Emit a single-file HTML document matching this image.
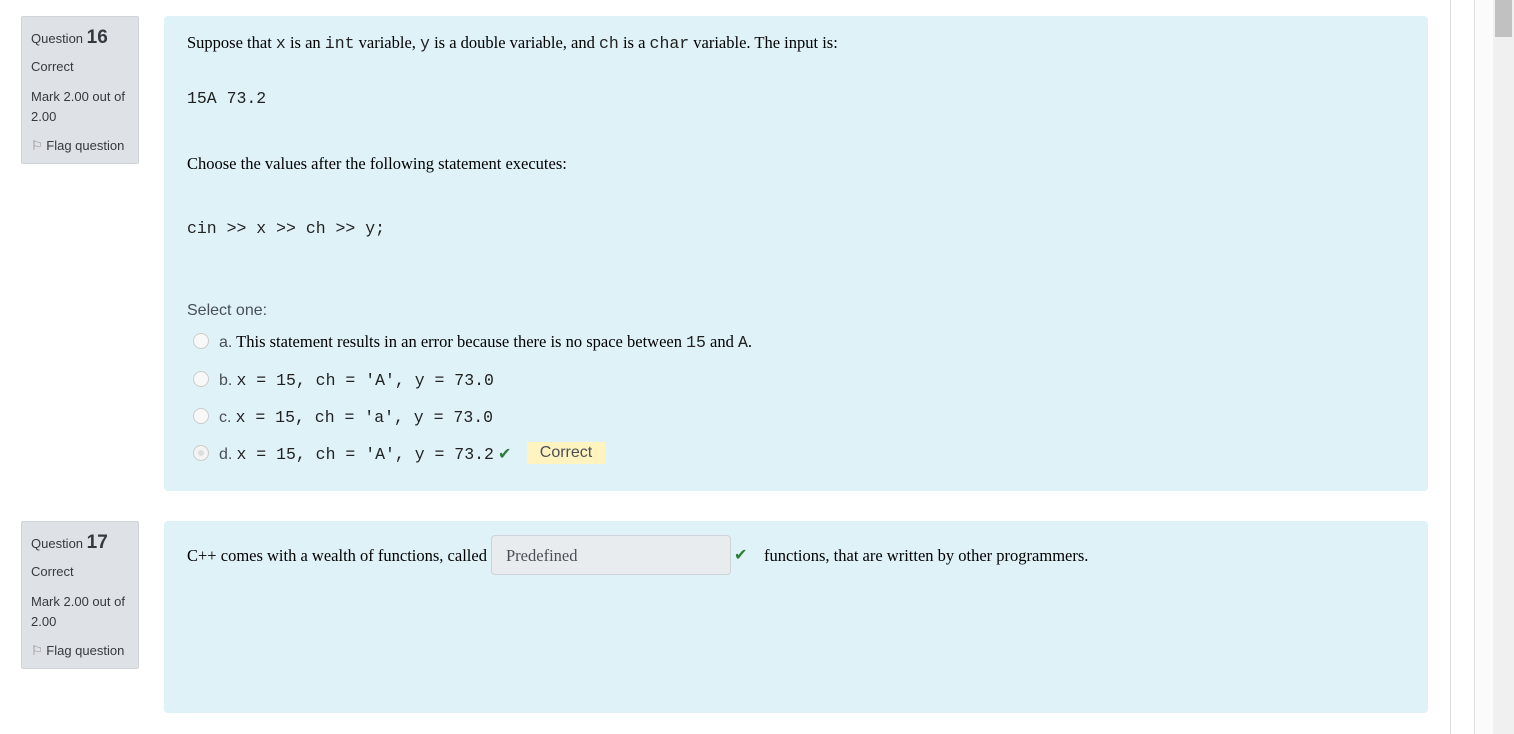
<!DOCTYPE html>
<html><head><style>
body{margin:0;width:1514px;height:734px;background:#fff;position:relative;overflow:hidden;font-family:"Liberation Sans",sans-serif;}
.info{position:absolute;left:21px;width:118px;background:#dee2e6;border:1px solid #ced4da;border-radius:2px;color:#343a40;font-size:13px;box-sizing:border-box;}
.info div{position:absolute;left:9px;white-space:nowrap;}
.card{position:absolute;left:164px;width:1264px;background:#def2f8;border-radius:4px;}
.s{font-family:"Liberation Serif",serif;font-size:16.5px;color:#000;position:absolute;white-space:nowrap;}
.m{font-family:"Liberation Mono",monospace;font-size:16.5px;color:#222;}
.r{position:absolute;left:29px;width:16px;height:16px;border-radius:50%;border:1px solid #ccc;background:#f8f8f8;box-sizing:border-box;}
.ck{color:#2d7d3a;font-weight:bold;font-family:"DejaVu Sans",sans-serif;font-size:16px;}
.sans{font-family:"Liberation Sans",sans-serif;color:#495057;font-size:16px;}
</style></head><body>
<div style="position:absolute;left:1450px;top:0;width:1px;height:734px;background:#ddd"></div>
<div style="position:absolute;left:1474px;top:0;width:1px;height:734px;background:#ddd"></div>
<div style="position:absolute;left:1476px;top:0;width:17px;height:734px;background:#fbfbfb"></div>
<div style="position:absolute;left:1493px;top:0;width:21px;height:734px;background:#f0f0f0"></div>
<div style="position:absolute;left:1495px;top:0;width:17px;height:37px;background:#c1c1c1"></div>

<div class="info" style="top:16px;height:148px">
<div style="top:10px"><span style="font-size:13px">Question</span> <b style="font-size:19px">16</b></div>
<div style="top:42px">Correct</div>
<div style="top:72px">Mark 2.00 out of</div>
<div style="top:92px">2.00</div>
<div style="top:121px"><span style="color:#888">⚐</span> Flag question</div>
</div>
<div class="card" style="top:16px;height:475px">
<div class="s" style="left:23px;top:17px">Suppose that <span class="m">x</span> is an <span class="m">int</span> variable, <span class="m">y</span> is a double variable, and <span class="m">ch</span> is a <span class="m">char</span> variable. The input is:</div>
<div class="s m" style="left:23px;top:73px">15A 73.2</div>
<div class="s" style="left:23px;top:138px">Choose the values after the following statement executes:</div>
<div class="s m" style="left:23px;top:203px">cin &gt;&gt; x &gt;&gt; ch &gt;&gt; y;</div>
<div class="s sans" style="left:23px;top:286px">Select one:</div>
<div class="r" style="top:317px"></div>
<div class="s" style="left:55px;top:316px"><span class="sans">a.</span> This statement results in an error because there is no space between <span class="m">15</span> and <span class="m">A</span>.</div>
<div class="r" style="top:355px"></div>
<div class="s" style="left:55px;top:354px"><span class="sans">b.</span> <span class="m">x = 15, ch = 'A', y = 73.0</span></div>
<div class="r" style="top:392px"></div>
<div class="s" style="left:55px;top:391px"><span class="sans">c.</span> <span class="m">x = 15, ch = 'a', y = 73.0</span></div>
<div class="r" style="top:429px;background:#ddd;box-shadow:inset 0 0 0 4px #f4f4f4"></div>
<div class="s" style="left:55px;top:428px"><span class="sans">d.</span> <span class="m">x = 15, ch = 'A', y = 73.2</span> <span class="ck">✔</span></div>
<div style="position:absolute;left:363px;top:426px;width:78px;height:22px;background:#fff3bf;color:#495057;font-size:16px;text-align:center;line-height:22px">Correct</div>
</div>

<div class="info" style="top:521px;height:148px">
<div style="top:10px"><span style="font-size:13px">Question</span> <b style="font-size:19px">17</b></div>
<div style="top:42px">Correct</div>
<div style="top:72px">Mark 2.00 out of</div>
<div style="top:92px">2.00</div>
<div style="top:121px"><span style="color:#888">⚐</span> Flag question</div>
</div>
<div class="card" style="top:521px;height:192px">
<div class="s" style="left:23px;top:25px">C++ comes with a wealth of functions, called</div>
<div style="position:absolute;left:327px;top:14px;width:240px;height:40px;box-sizing:border-box;background:#e9ecef;border:1px solid #ced4da;border-radius:4px"></div>
<div class="s" style="left:342px;top:25px;color:#495057">Predefined</div>
<div class="s ck" style="left:570px;top:24px">✔</div>
<div class="s" style="left:600px;top:25px">functions, that are written by other programmers.</div>
</div>
</body></html>
